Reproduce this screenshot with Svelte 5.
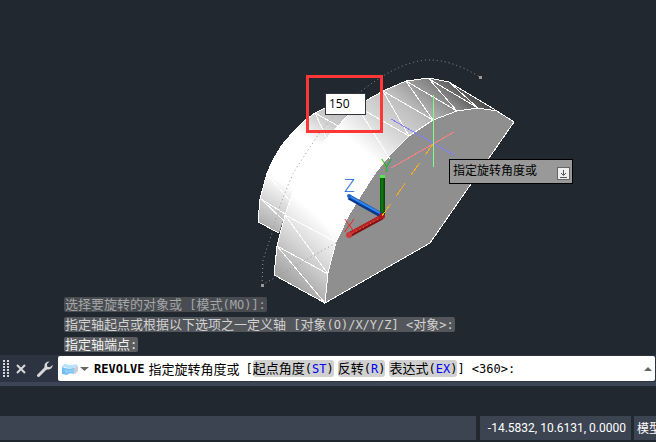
<script lang="ts">
  type Point = [number, number];

  let angle = $state('150');

  const history = [
    { text: '选择要旋转的对象或 [模式(MO)]:', age: 'oldest' },
    { text: '指定轴起点或根据以下选项之一定义轴 [对象(O)/X/Y/Z] <对象>:', age: 'older' },
    { text: '指定轴端点:', age: 'latest' }
  ];

  const options = [
    { label: '起点角度', key: 'ST' },
    { label: '反转', key: 'R' },
    { label: '表达式', key: 'EX' }
  ];

  const face: Point[] = [
    [325, 303], [328, 273], [336, 242], [349, 215], [363, 192], [376, 172], [390, 155],
    [409, 136], [433, 120], [457, 111], [478, 108], [497, 111], [514, 122], [430, 243]
  ];

  const frontBand: Point[] = [
    [325, 303], [274, 275], [277, 246], [285, 215], [293, 192], [302, 173], [313, 156], [325, 140],
    [339, 125], [355, 107], [367, 100], [383, 91], [406, 81], [429, 78], [449, 82], [497, 111],
    [478, 108], [457, 111], [433, 120], [409, 136], [390, 155], [376, 172], [363, 192],
    [349, 215], [336, 242], [328, 273]
  ];

  const backBand: Point[] = [
    [279, 233], [258, 222], [260, 199], [267, 173], [273, 160], [282, 145], [293, 132], [304, 121],
    [315, 113], [327, 107], [340, 101], [356, 104], [339, 125], [325, 140], [302, 173], [285, 215]
  ];

  // facet edges as x1, y1, x2, y2
  const edges = [
    [277, 246, 328, 274], [277, 246, 325, 303], [285, 215, 336, 242], [285, 215, 328, 274],
    [383, 91, 409, 136], [383, 91, 433, 120], [406, 81, 433, 120], [406, 81, 457, 111],
    [429, 79, 457, 111], [429, 79, 478, 108], [449, 82, 478, 108], [449, 82, 497, 111],
    [360, 108, 409, 136], [361, 113, 390, 159], [316, 211, 336, 242],
    [261, 199, 285, 214], [261, 199, 283, 220], [268, 175, 292, 190], [268, 175, 289, 200],
    [315, 113, 338, 126], [315, 113, 327, 139]
  ];

  const join = (points: Point[]) => points.map((p) => p.join(',')).join(' ');

  // CJK glyphs are set one size larger than the monospaced latin
  const split = (text: string) => text.match(/[\u4e00-\u9fff]+|[^\u4e00-\u9fff]+/g) ?? [];
</script>

{#snippet mixed(text: string)}
  {#each split(text) as part}<span class:cjk={/[\u4e00-\u9fff]/.test(part)}>{part}</span>{/each}
{/snippet}

<div class="app">
  <main class="viewport">
    <svg class="model" width="656" height="355" viewBox="0 0 656 355" aria-hidden="true">
      <defs>
        <linearGradient id="front" gradientUnits="userSpaceOnUse" x1="300" y1="290" x2="470" y2="90">
          <stop offset="0" stop-color="#a6a6a6" />
          <stop offset="0.12" stop-color="#d2d2d2" />
          <stop offset="0.26" stop-color="#ffffff" />
          <stop offset="0.56" stop-color="#ffffff" />
          <stop offset="0.68" stop-color="#d8d8d8" />
          <stop offset="0.8" stop-color="#bdbdbd" />
          <stop offset="0.92" stop-color="#858585" />
          <stop offset="1" stop-color="#484848" />
        </linearGradient>
        <linearGradient id="back" gradientUnits="userSpaceOnUse" x1="265" y1="225" x2="340" y2="100">
          <stop offset="0" stop-color="#b0b0b0" />
          <stop offset="0.32" stop-color="#ffffff" />
          <stop offset="0.66" stop-color="#ffffff" />
          <stop offset="0.82" stop-color="#cfcfcf" />
          <stop offset="1" stop-color="#b4b4b4" />
        </linearGradient>
        <linearGradient id="tubeY" x1="0" x2="1" y1="0" y2="0">
          <stop offset="0" stop-color="#064d06" />
          <stop offset="0.4" stop-color="#118011" />
          <stop offset="1" stop-color="#053e05" />
        </linearGradient>
      </defs>

      <polygon points={join(backBand)} fill="url(#back)" />
      <polyline points={join(backBand.slice(0, 11))} class="edge" />
      <polygon points={join(frontBand)} fill="url(#front)" />
      <polyline points={join(frontBand.slice(0, 16))} class="edge" />
      <polygon points={join(face)} fill="#8f8f8f" class="outline" />
      {#each edges as [x1, y1, x2, y2]}
        <line {x1} {y1} {x2} {y2} class="edge" />
      {/each}

      <path
        class="dots"
        d="M262 285 L263 260 L272 233 Q280 201 295 170 L318 135 Q338 108 360 92 Q377 79 390 72 Q412 60 430 60 Q452 60 480 77"
      />
      <path class="dots" d="M262 285 L348 236" />
      <rect x="261" y="284" width="3" height="3" fill="#999" />
      <rect x="479" y="76" width="3" height="3" fill="#999" />

      <line x1="391" y1="119" x2="454" y2="155" class="cross" stroke="#8080ff" />
      <line x1="391" y1="168" x2="454" y2="132" class="cross" stroke="#ff8080" />
      <line x1="433" y1="95" x2="433" y2="167" class="cross" stroke="#80ff80" />

      <rect x="380" y="176" width="5" height="39" fill="url(#tubeY)" />
      <rect x="380" y="175" width="5" height="3" fill="#58e058" />
      <line x1="349" y1="197" x2="381" y2="215" stroke="#06398c" stroke-width="5" />
      <line x1="349" y1="196" x2="380" y2="213" stroke="#2f86f2" stroke-width="2" />
      <circle cx="349" cy="196" r="2" fill="#1762c8" />
      <line x1="349" y1="235" x2="382" y2="217" stroke="#851010" stroke-width="5" />
      <line x1="349" y1="234" x2="382" y2="216" stroke="#c02323" stroke-width="3" />
      <line x1="349" y1="235" x2="382" y2="217" stroke="#ce8585" stroke-dasharray="1 3" />
      <circle cx="349" cy="235" r="3" fill="#c83c3c" />
      <circle cx="382" cy="216" r="3" fill="#ae1717" />
      <path d="M382 216 L433 144" class="cross" stroke="#f5ae1d" stroke-dasharray="15 10" />

      <text x="381" y="172" fill="#08b508">Y</text>
      <text x="344" y="192" fill="#1160dc">Z</text>
      <text x="344" y="232" fill="#e52626">X</text>
    </svg>

    <div class="highlight">
      <input class="angle" type="text" aria-label="指定旋转角度" bind:value={angle} />
    </div>

    <div class="tooltip">
      <span>指定旋转角度或</span>
      <button class="more" aria-label="选项">
        <svg width="11" height="11" viewBox="0 0 11 11">
          <path d="M5.5 2 V7 M3 5 L5.5 7.5 L8 5 M2 9.5 H9" fill="none" stroke="#555" />
        </svg>
      </button>
    </div>

    <ul class="history">
      {#each history as line}
        <li class={line.age}>{@render mixed(line.text)}</li>
      {/each}
    </ul>
  </main>

  <div class="command-bar">
    <svg class="grip" width="6" height="18" viewBox="0 0 6 18" aria-hidden="true">
      <path d="M1 0 V18 M5 0 V18" stroke="#d5d7da" stroke-width="2" stroke-dasharray="2 1" />
    </svg>
    <button class="tool" aria-label="关闭">
      <svg width="10" height="10" viewBox="0 0 10 10">
        <path d="M1 1 L9 9 M9 1 L1 9" stroke="#d8d8d8" stroke-width="2" />
      </svg>
    </button>
    <button class="tool wrench" aria-label="自定义">
      <svg width="16" height="16" viewBox="0 0 16 16">
        <path d="M1.5 14.5 L9 7" stroke="#d8d8d8" stroke-width="3" stroke-linecap="round" />
        <path d="M12.5 .5 Q8 .5 7.5 4.5 L7.5 7 L9 8.5 H11.5 Q15.5 8 15.7 3.8 L13 6.2 L10.2 5.8 L10 3 Z" fill="#d8d8d8" />
      </svg>
    </button>

    <div class="prompt">
      <button class="recent" aria-label="最近使用的命令">
        <svg width="27" height="14" viewBox="0 0 27 14">
          <path d="M0 5 Q1 2 4 2 Q9 4 14 2 L16 4 L12 6 Q7 7 2 5 Z" fill="#b8e2fb" />
          <path d="M0 5 Q6 8 12 6 V12 Q7 10 5 13 L0 12 Z" fill="#6fbdf3" />
          <path d="M2 7 Q7 9 12 7 V11 Q7 9 4 12 Z" fill="#8bcdf8" />
          <path d="M12 6 L16 4 V9 L13 12 L12 11 Z" fill="#c9cdd1" />
          <path d="M18 5 H27 L22.5 9 Z" fill="#666" />
        </svg>
      </button>
      <strong>REVOLVE</strong>
      <span class="message">{@render mixed('指定旋转角度或')}</span>
      <span>[</span>
      <div class="options">
        {#each options as option}
          <button><span class="cjk">{option.label}</span>(<b>{option.key}</b>)</button>
        {/each}
      </div>
      <span class="default">] &lt;360&gt;:</span>
      <button class="expand" aria-label="命令历史">
        <svg width="8" height="4" viewBox="0 0 8 4"><path d="M0 4 L4 0 L8 4 Z" fill="#666" /></svg>
      </button>
    </div>
  </div>

  <div class="dock"></div>

  <footer class="status">
    <div class="fill"></div>
    <output class="coords">-14.5832, 10.6131, 0.0000</output>
    <button class="space">模型</button>
  </footer>
</div>

<style>
  :global(body) {
    margin: 0;
    background: #212830;
  }

  .app {
    display: flex;
    flex-direction: column;
    min-height: 100vh;
    overflow: hidden;
    font-family: 'DejaVu Sans Mono', 'Noto Sans CJK SC', monospace;
    font-size: 12px;
  }

  button {
    display: flex;
    align-items: center;
    padding: 0;
    border: 0;
    background: none;
    color: inherit;
    font: inherit;
    cursor: pointer;
  }

  .cjk {
    font-family: 'Noto Sans CJK SC', sans-serif;
    font-size: 13px;
  }

  .viewport {
    position: relative;
    display: flex;
    flex: 1;
    flex-direction: column;
    justify-content: flex-end;
  }

  .model {
    position: absolute;
    top: 0;
    left: 0;
  }

  .model text {
    font: 300 18px 'Lato Light', Lato, sans-serif;
  }

  .edge,
  .outline {
    stroke: #fff;
    shape-rendering: crispEdges;
  }

  .edge {
    fill: none;
  }

  .dots {
    fill: none;
    stroke: #909498;
    stroke-dasharray: 1 3;
  }

  .cross {
    shape-rendering: crispEdges;
  }

  .highlight {
    position: absolute;
    top: 75px;
    left: 306px;
    box-sizing: border-box;
    width: 77px;
    height: 58px;
    padding: 15px 14px 0 16px;
    border: 3px solid #ff3636;
  }

  .angle {
    display: block;
    box-sizing: border-box;
    width: 41px;
    height: 22px;
    padding: 0 3px 2px;
    border: 1px solid #30353c;
    border-radius: 0;
    background: #fff;
    color: #000;
    font: 12px 'Open Sans', sans-serif;
  }

  .tooltip {
    position: absolute;
    top: 159px;
    left: 449px;
    display: flex;
    justify-content: space-between;
    box-sizing: border-box;
    width: 124px;
    height: 25px;
    padding: 0 3px;
    border: 1px solid #000;
    background: #999;
    color: #000;
    font: 12px/20px 'Noto Sans CJK SC', sans-serif;
  }

  .more {
    align-self: flex-end;
    margin-bottom: 4px;
    background: #eee;
    outline: 1px solid #666;
  }

  .history {
    position: relative;
    display: flex;
    flex-direction: column;
    align-items: flex-start;
    gap: 5px;
    margin: 0;
    padding: 0 0 3px 64px;
    list-style: none;
    line-height: 13px;
  }

  .history li {
    height: 15px;
    padding: 0 1px;
    border-radius: 2px;
    background: #53565a;
    color: #d2d2d2;
    white-space: pre;
  }

  .history .oldest {
    background: #484c50;
    color: #a4a6a8;
  }

  .history .latest {
    background: #5b5e60;
    color: #f0f0f0;
  }

  .command-bar {
    display: flex;
    align-items: center;
    height: 27px;
    padding: 0 1px 0 3px;
    background: #2d3441;
  }

  .tool {
    margin-left: 7px;
  }

  .wrench {
    margin-left: 11px;
  }

  .prompt {
    display: flex;
    flex: 1;
    align-items: center;
    height: 25px;
    margin-left: 5px;
    padding: 0 3px 0 4px;
    border-radius: 2px;
    background: #fff;
    color: #000;
    white-space: pre;
  }

  .prompt strong {
    margin-left: 5px;
  }

  .message {
    margin: 0 6px 0 4px;
  }

  .options {
    display: flex;
    gap: 4px;
  }

  .options button {
    display: block;
    height: 17px;
    border-radius: 3px;
    background: #d0d0d0;
    line-height: 15px;
  }

  .options b {
    color: #0000f4;
    font-weight: normal;
  }

  .expand {
    margin-left: auto;
  }

  .dock {
    height: 30px;
    border-top: 4px solid #3c4556;
    background: #212830;
  }

  .status {
    display: flex;
    gap: 3px;
    height: 24px;
    border-bottom: 2px solid #20262e;
    color: #fff;
    line-height: 24px;
  }

  .fill {
    flex: 1;
    margin-right: 1px;
    background: #3c4452;
  }

  .coords {
    padding: 0 5px 0 8px;
    background: #3c4452;
    font-family: Roboto, sans-serif;
  }

  .space {
    width: 22px;
    padding: 0 0 2px 3px;
    overflow: hidden;
    background: #3c4452;
    font: 12px 'Noto Sans CJK SC', sans-serif;
    white-space: nowrap;
  }
</style>
